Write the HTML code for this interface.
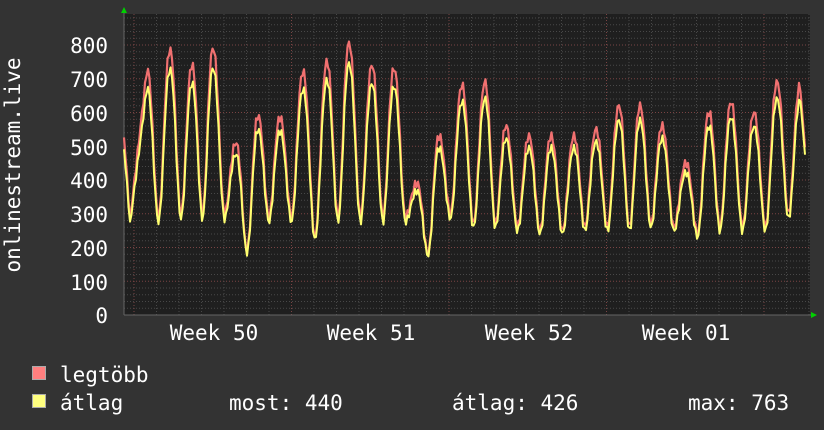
<!DOCTYPE html>
<html><head><meta charset="utf-8"><style>
html,body{margin:0;padding:0;background:#333;width:824px;height:430px;overflow:hidden}
svg text{font-family:"DejaVu Sans Mono","Liberation Mono",monospace;font-size:21px;fill:#fff}
</style></head><body>
<svg id="g" width="824" height="430" xmlns="http://www.w3.org/2000/svg">
<rect x="0" y="0" width="824" height="430" fill="#333"/>
<rect x="124" y="14" width="686" height="301" fill="#1f1f1f"/>
<g id="grid"></g>
<path id="red" fill="none" stroke="#f07070" stroke-width="2.2" stroke-linejoin="round"/>
<path id="yel" fill="none" stroke="#ffff70" stroke-width="2" stroke-linejoin="round"/>
<polygon points="121,13 127,13 124,7" fill="#00d000"/>
<polygon points="811,312 811,318 817,315" fill="#00d000"/>
<g text-anchor="end">
<text x="108" y="53">800</text><text x="108" y="87">700</text><text x="108" y="121">600</text>
<text x="108" y="155">500</text><text x="108" y="188">400</text><text x="108" y="222">300</text>
<text x="108" y="256">200</text><text x="108" y="290">100</text><text x="108" y="323">0</text>
</g>
<g text-anchor="middle">
<text x="214" y="340">Week 50</text><text x="371" y="340">Week 51</text>
<text x="529" y="340">Week 52</text><text x="686" y="340">Week 01</text>
</g>
<text transform="translate(20,165) rotate(-90)" text-anchor="middle">onlinestream.live</text>
<rect x="32.5" y="366.5" width="13" height="13" fill="#ff7f7f" stroke="#aaa"/>
<rect x="32.5" y="394.5" width="13" height="13" fill="#ffff7f" stroke="#aaa"/>
<text x="60" y="382">legtöbb</text>
<text x="60" y="410">átlag</text>
<text x="229" y="410">most: 440</text>
<text x="452" y="410">átlag: 426</text>
<text x="688" y="410">max: 763</text>
</svg>
<script>
(function(){
var g=document.getElementById("grid"),s="";
function Y(v){return 315-v*0.3375;}
for(var v=20;v<=880;v+=20){var y=Y(v);var maj=v%100==0;
 s+='<line x1="124" x2="810" y1="'+y+'" y2="'+y+'" stroke="'+(maj?'#7a4444':'#484848')+'" stroke-width="1" stroke-dasharray="1,2"/>';}
for(var x=134-22.5;x<810;x+=22.5){if(x<125)continue;var k=Math.round((x-134)/22.5);var maj=((k%7)+7)%7==0;
 s+='<line y1="14" y2="315" x1="'+x+'" x2="'+x+'" stroke="'+(maj?'#7a4444':'#484848')+'" stroke-width="1" stroke-dasharray="1,2"/>';}
s+='<line x1="124" x2="812" y1="315" y2="315" stroke="#666"/><line x1="124" x2="124" y1="12" y2="315" stroke="#666"/>';
g.innerHTML=s;
var pk=[[147,730],[170,785],[192,740],[213,790],[236,510],[258,590],[280,585],[303,720],[327,750],[349,805],[372,740],[394,730],[417,390],[439,530],[462,680],[485,690],[506,560],[529,530],[551,530],[574,530],[596,550],[619,620],[640,620],[662,560],[686,450],[709,600],[731,630],[754,600],[777,690],[800,680]];
var tr=[290,300,300,300,190,290,290,230,290,290,290,290,180,300,270,270,260,250,250,260,260,260,270,260,240,260,260,260,300,300];
var r=[],yl=[];
for(var x=124;x<=806;x+=1.5){
 var i=0;while(i<pk.length-1&&pk[i+1][0]<x)i++;
 var a=pk[i],b=pk[Math.min(i+1,pk.length-1)];
 var val;
 if(x<=a[0]){
   if(x<130)val=530-(x-124)*40;
   else{var t=(a[0]-x)/17;t=Math.max(0,Math.min(1,t));val=a[1]-(a[1]-280)*t;}
 } else {
   var d=b[0]-a[0];if(d<=0)d=22.5;
   var t2=(x-a[0])/d;t2=Math.max(0,Math.min(1,t2));
   var lo=tr[i];
   var c=(1-Math.cos(2*Math.PI*t2))/2; c=Math.pow(Math.max(0,c),1.2);
   var pt=t2<0.5?a[1]:b[1];val=pt-(pt-lo)*c;
 }
 val+=Math.sin(x*1.7)*12;
 var ve=val*0.91+12;
 if(x>800){var f=(x-800)/6;val=680-f*220;ve=650-f*210;}
 if(isNaN(val))continue;
 r.push(x.toFixed(1)+","+Y(val).toFixed(1));
 yl.push(x.toFixed(1)+","+Y(ve).toFixed(1));
}
document.getElementById("red").setAttribute("d","M"+r.join("L"));
document.getElementById("yel").setAttribute("d","M"+yl.join("L"));
})();
</script>
</body></html>
